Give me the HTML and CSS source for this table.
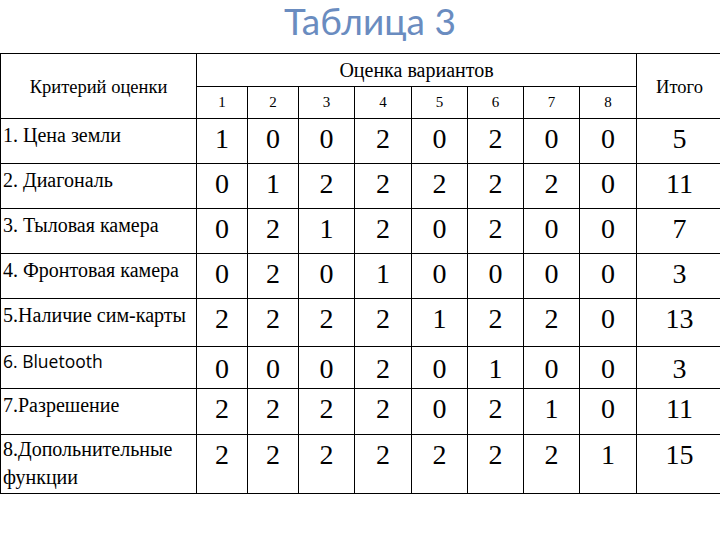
FILE: index.html
```html
<!DOCTYPE html>
<html lang="ru">
<head>
<meta charset="utf-8">
<title>Таблица 3</title>
<link rel="stylesheet" href="styles.css">
</head>
<body>
<div class="sheet">
  <h1 class="title">Таблица 3</h1>
  <table class="grid">
    <colgroup>
      <col class="c-label">
      <col class="c-narrow"><col class="c-narrow">
      <col class="c-mid"><col class="c-wide"><col class="c-mid"><col class="c-mid"><col class="c-mid"><col class="c-wide">
      <col class="c-total">
    </colgroup>
    <thead>
      <tr class="h-top">
        <th rowspan="2" class="h-side">Критерий оценки</th>
        <th colspan="8" class="h-main">Оценка вариантов</th>
        <th rowspan="2" class="h-side">Итого</th>
      </tr>
      <tr class="h-sub">
        <th>1</th><th>2</th><th>3</th><th>4</th><th>5</th><th>6</th><th>7</th><th>8</th>
      </tr>
    </thead>
    <tbody>
      <tr class="r-std">
        <td class="lbl">1. Цена земли</td>
        <td>1</td><td>0</td><td>0</td><td>2</td><td>0</td><td>2</td><td>0</td><td>0</td><td>5</td>
      </tr>
      <tr class="r-std">
        <td class="lbl">2. Диагональ</td>
        <td>0</td><td>1</td><td>2</td><td>2</td><td>2</td><td>2</td><td>2</td><td>0</td><td>11</td>
      </tr>
      <tr class="r-std">
        <td class="lbl">3. Тыловая камера</td>
        <td>0</td><td>2</td><td>1</td><td>2</td><td>0</td><td>2</td><td>0</td><td>0</td><td>7</td>
      </tr>
      <tr class="r-std">
        <td class="lbl">4. Фронтовая камера</td>
        <td>0</td><td>2</td><td>0</td><td>1</td><td>0</td><td>0</td><td>0</td><td>0</td><td>3</td>
      </tr>
      <tr class="r-5">
        <td class="lbl">5.Наличие сим-карты</td>
        <td>2</td><td>2</td><td>2</td><td>2</td><td>1</td><td>2</td><td>2</td><td>0</td><td>13</td>
      </tr>
      <tr class="r-6">
        <td class="lbl lbl-sans">6. Bluetooth</td>
        <td>0</td><td>0</td><td>0</td><td>2</td><td>0</td><td>1</td><td>0</td><td>0</td><td>3</td>
      </tr>
      <tr class="r-7">
        <td class="lbl">7.Разрешение</td>
        <td>2</td><td>2</td><td>2</td><td>2</td><td>0</td><td>2</td><td>1</td><td>0</td><td>11</td>
      </tr>
      <tr class="r-8">
        <td class="lbl lbl-two">8.Допольнительные функции</td>
        <td>2</td><td>2</td><td>2</td><td>2</td><td>2</td><td>2</td><td>2</td><td>1</td><td>15</td>
      </tr>
    </tbody>
  </table>
</div>
</body>
</html>
```
FILE: styles.css
```css
html, body {
  margin: 0;
  padding: 0;
  background: #ffffff;
}

.sheet {
  width: 720px;
  height: 540px;
  overflow: hidden;
  background: #ffffff;
}

.title {
  margin: 0;
  height: 53px;
  box-sizing: border-box;
  padding: 0 0 0 20px;
  text-align: center;
  font-family: Lato, "Open Sans", sans-serif;
  font-weight: 400;
  font-size: 37px;
  line-height: 42px;
  color: #6a8cc0;
}

.grid {
  border-collapse: collapse;
  table-layout: fixed;
  width: 722px;
  font-family: "Liberation Serif", "Times New Roman", serif;
  color: #000;
}

.grid th,
.grid td {
  border: 1px solid #000;
  padding: 0;
  overflow: hidden;
}

.c-label { width: 196px; }
.c-narrow { width: 51px; }
.c-mid { width: 56px; }
.c-wide { width: 57px; }
.c-total { width: 86px; }

.h-top { height: 33px; }
.h-sub { height: 32px; }

.grid th {
  font-weight: 400;
  font-size: 15px;
  text-align: center;
  vertical-align: middle;
}

.grid th.h-main {
  font-size: 20px;
}

.grid th.h-side {
  font-size: 18.5px;
  padding-top: 2px;
}

.grid td {
  font-size: 28px;
  line-height: 32px;
  text-align: center;
  vertical-align: top;
  padding-top: 4px;
}

.grid td.lbl {
  font-size: 20px;
  line-height: 22px;
  text-align: left;
  padding: 5px 0 0 2px;
  white-space: nowrap;
}

.grid td.lbl-sans {
  font-family: "Open Sans", "Noto Sans", sans-serif;
  font-size: 17.5px;
  padding-top: 3px;
}

.grid td.lbl-two {
  white-space: normal;
  line-height: 28px;
  padding-top: 0;
}

.r-std { height: 45px; }
.r-5 { height: 48px; }
.r-6 { height: 42px; }
.r-7 { height: 46px; }
.r-8 { height: 59px; }

.r-6 td { padding-top: 6px; }
```
